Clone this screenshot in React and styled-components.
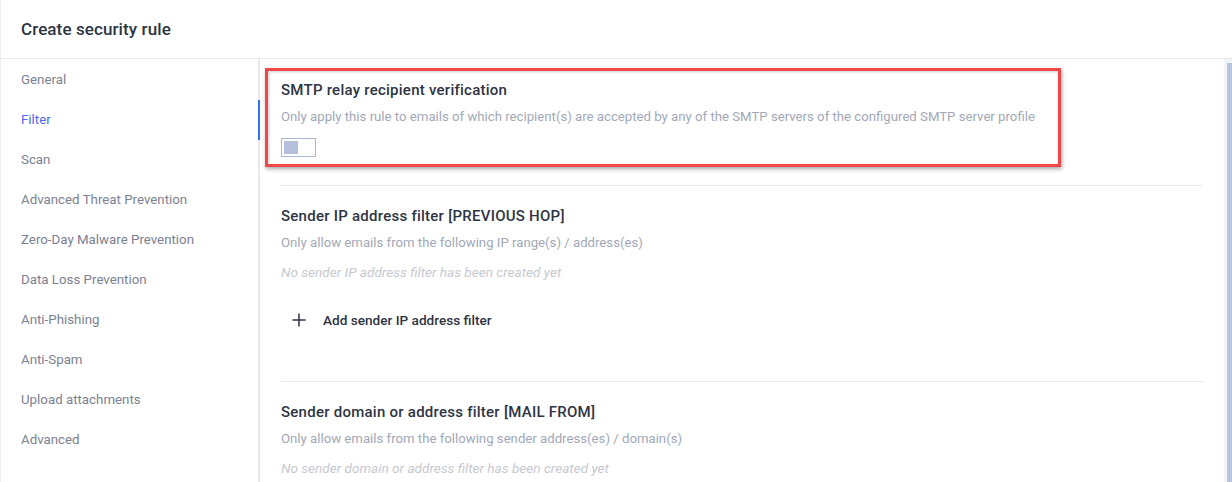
import React from 'react'
import styled, { createGlobalStyle } from 'styled-components'

const GlobalStyle = createGlobalStyle`
  html, body {
    margin: 0;
    padding: 0;
    height: 100%;
    background: #fff;
    font-family: Roboto, 'Noto Sans', sans-serif;
    overflow: hidden;
  }
`

const Page = styled.div`
  display: flex;
  flex-direction: column;
  height: 100vh;
  border-left: 1px solid #eceef2;
  box-sizing: border-box;
`

const Header = styled.header`
  height: 58px;
  flex-shrink: 0;
  display: flex;
  align-items: center;
  padding-left: 20px;
  border-bottom: 1px solid #e8e9ed;
`

const Title = styled.h1`
  margin: 0;
  font-size: 17px;
  font-weight: 500;
  color: #2e3444;
  letter-spacing: 0.1px;
`

const Body = styled.div`
  flex: 1;
  display: flex;
  min-height: 0;
`

const Sidebar = styled.nav`
  width: 257px;
  flex-shrink: 0;
  border-right: 2px solid #e7e8ec;
`

const NavItem = styled.div`
  position: relative;
  height: 40px;
  display: flex;
  align-items: center;
  padding-left: 20px;
  font-size: 13.3px;
  color: ${({ active }) => (active ? '#4a6cf0' : '#7c8192')};

  &::after {
    content: '';
    display: ${({ active }) => (active ? 'block' : 'none')};
    position: absolute;
    right: -2px;
    top: 1px;
    bottom: -1px;
    width: 2px;
    background: #2f6ff0;
  }
`

const Content = styled.main`
  flex: 1;
  padding: 0 21px;
  overflow: hidden;
`

const Scrollbar = styled.div`
  width: 8px;
  flex-shrink: 0;
  background: #f2f4f8;
  padding: 4px 0 0 3px;
  box-sizing: border-box;
`

const Thumb = styled.div`
  height: 100%;
  background: #b8c3dc;
`

const Section = styled.section`
  position: relative;
  padding: ${({ first }) => (first ? '21px 0 28px' : '20px 0 0')};
  border-bottom: ${({ last }) => (last ? 'none' : '1px solid #e8e9ee')};
  min-height: ${({ tall }) => (tall ? '175px' : 'auto')};
`

const SectionTitle = styled.h2`
  margin: 0;
  font-size: 15px;
  line-height: 20px;
  font-weight: 500;
  letter-spacing: 0.25px;
  color: #2e3444;
`

const Description = styled.p`
  margin: 7px 0 0;
  font-size: 13.2px;
  line-height: 19px;
  color: #a2a8b8;
`

const Empty = styled.p`
  margin: 11px 0 0;
  font-size: 13.6px;
  line-height: 18px;
  font-style: italic;
  color: #c6c9d1;
`

const Toggle = styled.div`
  margin-top: 12px;
  width: 35px;
  height: 19px;
  box-sizing: border-box;
  border: 1px solid #a9b6d6;
  padding: 2px;
`

const Knob = styled.div`
  width: 14px;
  height: 13px;
  background: #b5c1dc;
`

const AddButton = styled.button`
  display: flex;
  align-items: center;
  gap: 17px;
  margin: 19px 0 0 11px;
  height: 40px;
  padding: 0;
  border: none;
  background: none;
  font-family: inherit;
  font-size: 13.6px;
  font-weight: 500;
  color: #2e3444;
`

const Highlight = styled.div`
  position: absolute;
  left: -16px;
  top: 9px;
  width: 796px;
  height: 99px;
  box-sizing: border-box;
  border: 3px solid #f04848;
  box-shadow: 1px 2px 4px rgba(0, 0, 0, 0.35), inset 1px 1px 3px rgba(0, 0, 0, 0.2);
  pointer-events: none;
`

const navItems = [
  'General',
  'Filter',
  'Scan',
  'Advanced Threat Prevention',
  'Zero-Day Malware Prevention',
  'Data Loss Prevention',
  'Anti-Phishing',
  'Anti-Spam',
  'Upload attachments',
  'Advanced',
]

const Plus = () => (
  <svg width='14' height='14' viewBox='0 0 14 14'>
    <path d='M7 0.5v13M0.5 7h13' stroke='#2e3444' strokeWidth='1.5' />
  </svg>
)

const App = () => (
  <>
    <GlobalStyle />
    <Page>
      <Header>
        <Title>Create security rule</Title>
      </Header>
      <Body>
        <Sidebar>
          {navItems.map((item) => (
            <NavItem key={item} active={item === 'Filter'}>
              {item}
            </NavItem>
          ))}
        </Sidebar>
        <Content>
          <Section first>
            <SectionTitle>SMTP relay recipient verification</SectionTitle>
            <Description>
              Only apply this rule to emails of which recipient(s) are accepted by any of the SMTP
              servers of the configured SMTP server profile
            </Description>
            <Toggle>
              <Knob />
            </Toggle>
            <Highlight />
          </Section>
          <Section tall>
            <SectionTitle>Sender IP address filter [PREVIOUS HOP]</SectionTitle>
            <Description>Only allow emails from the following IP range(s) / address(es)</Description>
            <Empty>No sender IP address filter has been created yet</Empty>
            <AddButton>
              <Plus />
              Add sender IP address filter
            </AddButton>
          </Section>
          <Section last>
            <SectionTitle>Sender domain or address filter [MAIL FROM]</SectionTitle>
            <Description>Only allow emails from the following sender address(es) / domain(s)</Description>
            <Empty>No sender domain or address filter has been created yet</Empty>
          </Section>
        </Content>
        <Scrollbar>
          <Thumb />
        </Scrollbar>
      </Body>
    </Page>
  </>
)

export default App
